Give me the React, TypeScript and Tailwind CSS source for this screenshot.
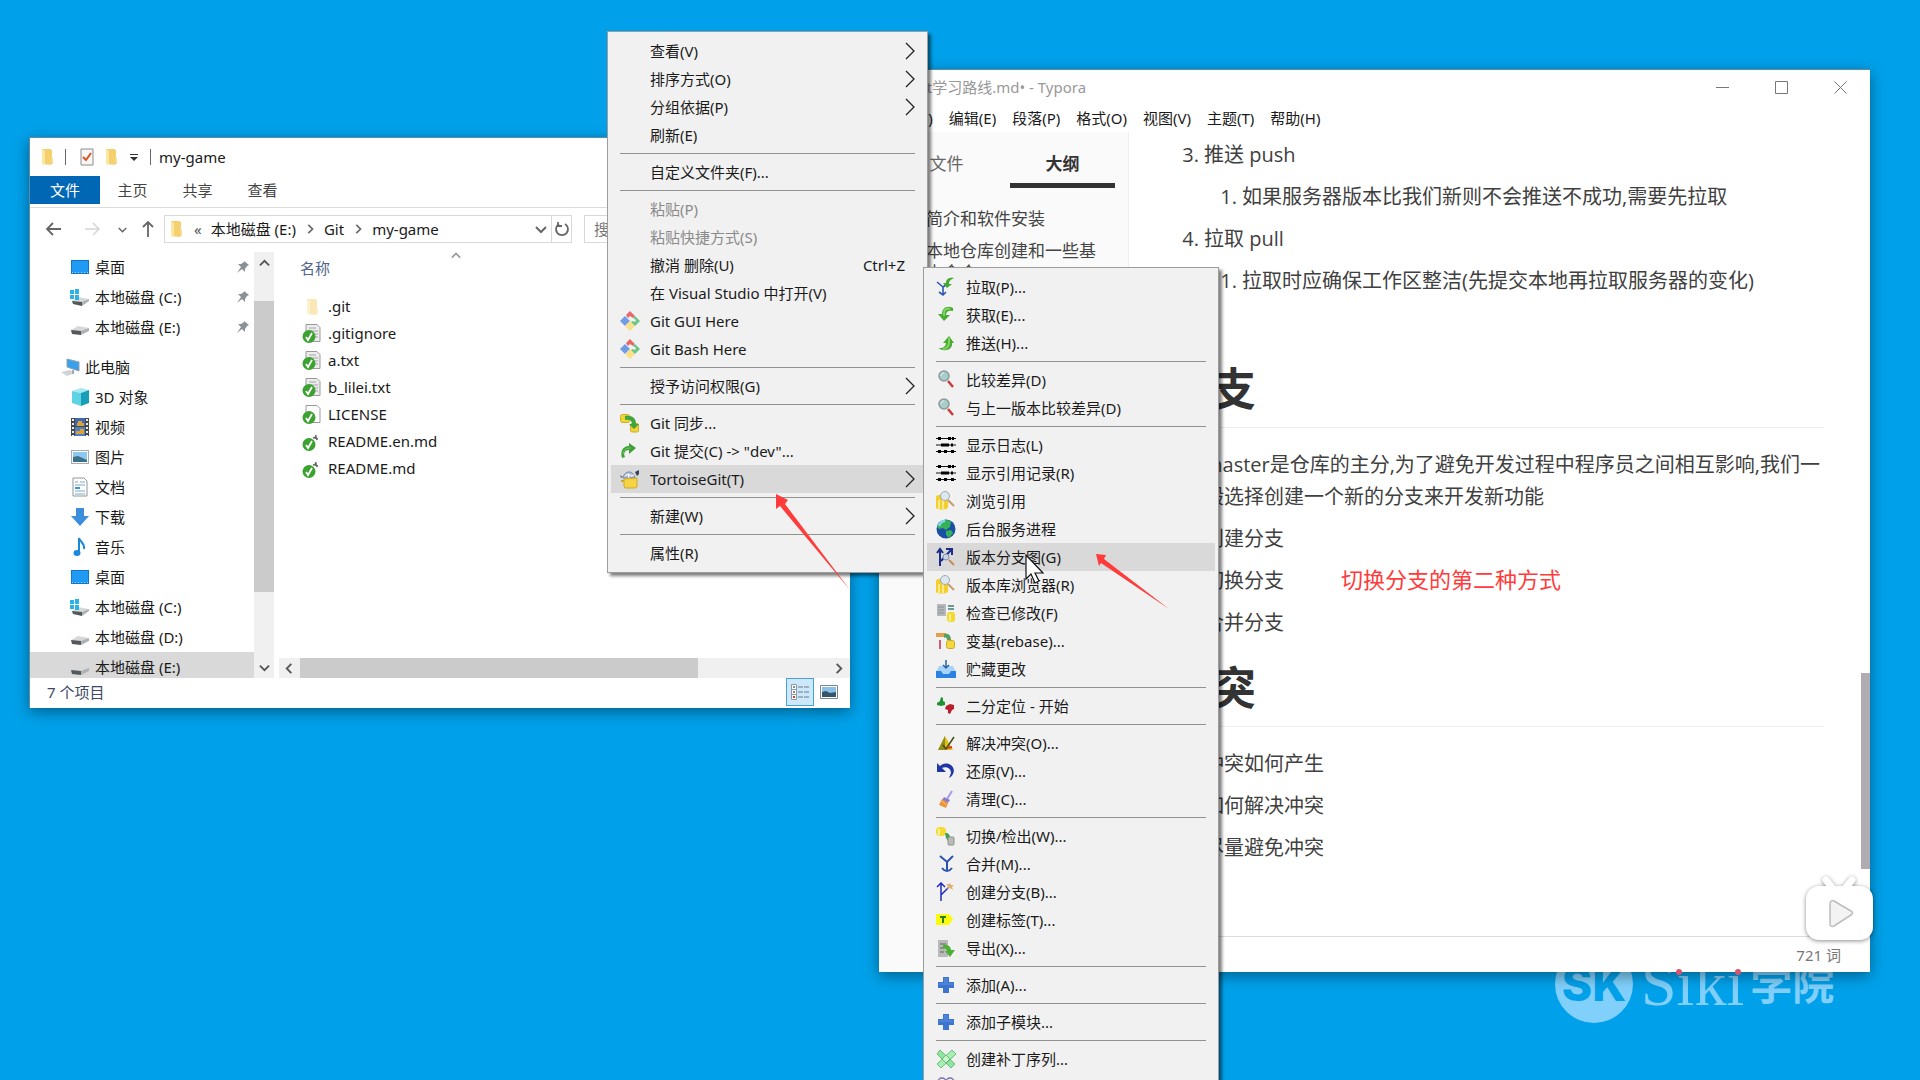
import type { ReactNode } from 'react';

type MenuEntry =
  | { kind: 'separator' }
  | {
      kind: 'item';
      label: string;
      icon?: ReactNode;
      shortcut?: string;
      submenu?: boolean;
      disabled?: boolean;
      active?: boolean;
    };

const separator: MenuEntry = { kind: 'separator' };

function item(label: string, icon?: ReactNode, extra: object = {}): MenuEntry {
  return { kind: 'item', label, icon, ...extra };
}

/* ---------- icons ---------- */

function Svg({ children, className = 'size-5' }: { children: ReactNode; className?: string }) {
  return (
    <svg viewBox="0 0 20 20" className={`${className} shrink-0`} fill="none" aria-hidden="true">
      {children}
    </svg>
  );
}

function FolderIcon({ className = 'h-4 w-3', faded = false }: { className?: string; faded?: boolean }) {
  return (
    <svg viewBox="0 0 12 16" className={`${className} shrink-0`} aria-hidden="true" opacity={faded ? 0.5 : 1}>
      <path d="M1 0h8l2 1v13l-1 2-9-1z" fill="#f5d070" />
      <path d="M1 0l3 2v14l-3-1z" fill="#fbe6a2" />
      <path d="M10 9h2v6h-2z" fill="#f8dc8c" />
    </svg>
  );
}

const gitIcon = (
  <Svg>
    <path d="M5 5l5 5-5 5-5-5z" fill="#6f9be8" />
    <path d="M10 10l5 5-5 5-5-5z" fill="#fbe08a" />
    <path d="M6 4l4-4 5 5-2 2-3-2-2 2z" fill="#e8686a" />
    <path d="M15 5l5 5-5 5-4-4 2-1 2 1 1-2-3-2z" fill="#6cc784" />
  </Svg>
);

const syncIcon = (
  <Svg>
    <rect x="0.5" y="1.5" width="9" height="8" rx="2" fill="#f2d535" stroke="#cdae22" />
    <rect x="10.5" y="10.5" width="8" height="8.5" rx="1.5" fill="#f2d535" stroke="#cdae22" />
    <path d="M5 3c7-1 11 2 11 8h3l-5 5-5-5h3c0-3-2-5-7-4z" fill="#3fa53c" />
  </Svg>
);

const commitIcon = (
  <Svg>
    <path d="M2 17C0 10 3 5 9 5V2l7 5-7 6V9c-4 0-6 3-4 7z" fill="#3e9f36" />
    <path d="M3 13c0-4 3-6 8-6" stroke="#7ccc6a" />
  </Svg>
);

const tortoiseIcon = (
  <Svg>
    <path d="M3 9c1-7 10-9 12 0z" fill="#b3c2da" stroke="#6e819f" />
    <path d="M5 7l3-2 3 2 3-1M8 5l1 4" stroke="#fff" />
    <path d="M15 3l4-2v4l-2 2z" fill="#34405c" />
    <path d="M0 6l3 2-2 1z" fill="#5d6f8e" />
    <path d="M4 10l13-1v9l-2 1H5l-1-2z" fill="#f5d443" stroke="#d1a92b" />
    <path d="M1 12h3" stroke="#d1a92b" strokeWidth="2" />
  </Svg>
);

const pullIcon = (
  <Svg>
    <path d="M1 5l6 5v8M7 10l3-2M3 15l4 3 3-3" stroke="#2c57b8" strokeWidth="1.6" />
    <path d="M18 1c-6-1-8 2-8 5H7l4 5 5-4h-3c0-3 1-4 5-6z" fill="#45a930" />
  </Svg>
);

const fetchIcon = (
  <Svg>
    <path d="M17 3C11 0 6 3 6 9H2l6 7 6-6h-4c0-3 2-5 7-4z" fill="#4aab33" />
    <path d="M14 4c-3-1-6 0-6 4v3" stroke="#82d565" strokeWidth="2" />
  </Svg>
);

const pushIcon = (
  <Svg>
    <path d="M2 15c3 3 15 4 14-5h2l-5-7-6 7h3c0 3-3 6-8 5z" fill="#4aab33" />
    <path d="M13 5v5c0 3-3 6-6 6" stroke="#82d565" strokeWidth="2" />
  </Svg>
);

const diffIcon = (
  <Svg>
    <path d="M12 11l5 6" stroke="#c93a3a" strokeWidth="2.5" />
    <circle cx="8" cy="6" r="5" fill="#a9ccc9" stroke="#8b9a9c" strokeWidth="1.5" />
    <path d="M5 6c0-2 1-3 3-3" stroke="#e8f6f5" />
  </Svg>
);

const logIcon = (
  <Svg>
    <path d="M0 3.5h20M0 10h20M0 16.5h20" stroke="#111" />
    <path d="M2 3.5h3M12 3.5h3M16 3.5h2M5 10h8M15 10h2M2 16.5h3M8 16.5h3M15 16.5h3" stroke="#000" strokeWidth="3" />
  </Svg>
);

const browseIcon = (
  <Svg>
    <path d="M0 6c0-3 8-3 12 0v11c-3 2-10 2-12 0z" fill="#f3cf2d" />
    <path d="M3 9v9M7 9v9" stroke="#fbe98a" strokeWidth="2" />
    <path d="M12 9l6 6" stroke="#c99b66" strokeWidth="2" />
    <circle cx="9" cy="5" r="4.5" fill="#dce7ef" stroke="#a0a8ae" />
  </Svg>
);

const globeIcon = (
  <Svg>
    <circle cx="10" cy="10" r="9.5" fill="#1b4fa6" />
    <path d="M4 3c5-3 9-2 11 0l-1 5-4 3-3-2-4 1-2-2z" fill="#35b257" />
    <path d="M10 12l5-1 2 3-4 5-3-3z" fill="#35b257" />
    <path d="M3 7c1-3 3-5 6-5" stroke="#7fd8ee" strokeWidth="2.5" />
  </Svg>
);

const graphIcon = (
  <Svg>
    <path d="M4 19V2M1 6l3-4 3 4M5 14l10-11M10 2h6v6" stroke="#1c2c8c" strokeWidth="2" />
    <circle cx="10" cy="10" r="3" fill="#c9d3e6" stroke="#8390b0" />
    <path d="M13 13l5 5" stroke="#c98a58" strokeWidth="2" />
  </Svg>
);

const statusIcon = (
  <Svg>
    <rect x="1" y="1" width="9" height="12" fill="#b5b8bb" />
    <path d="M2 4h6M2 7h6M2 10h6" stroke="#8c9094" />
    <path d="M12 3h6M12 6h6" stroke="#3f7c78" strokeWidth="1.5" />
    <rect x="11" y="9" width="8" height="10" rx="3" fill="#f3d92c" />
    <path d="M14 11v7" stroke="#faef93" strokeWidth="2" />
  </Svg>
);

const rebaseIcon = (
  <Svg>
    <path d="M0 2h10v4H0z" fill="#e3a04a" />
    <path d="M4 9v9" stroke="#c32c46" strokeWidth="1.5" />
    <path d="M8 3c5-1 7 2 7 6h-4c0-2-1-3-3-2z" fill="#5c9d62" />
    <rect x="10.5" y="9.5" width="8" height="8" rx="2" fill="#f3d73b" stroke="#caa82a" />
  </Svg>
);

const stashIcon = (
  <Svg>
    <path d="M3 7h14l3 6v5H0v-5z" fill="#a9d3f8" />
    <path d="M0 12h5l2 3h6l2-3h5v7H0z" fill="#2a83e2" />
    <path d="M10 1v8M7 6l3 3 3-3" stroke="#2565a8" strokeWidth="1.5" />
  </Svg>
);

const bisectIcon = (
  <Svg>
    <path d="M1 7l3-2 1-4 2 1v3l2 1v3l-4 1-4-1z" fill="#1f9331" />
    <path d="M10 10l4-2 4 1v4l-2 1-2 4-2-1v-3l-3-1z" fill="#bb1f2b" />
  </Svg>
);

const conflictIcon = (
  <Svg>
    <path d="M9 3l8 14H2z" fill="#dfc01e" />
    <path d="M9 3l-7 14h7z" fill="#8f8c1c" />
    <path d="M7 12l3 4 8-12" stroke="#44490f" strokeWidth="1.5" />
    <path d="M11 15l5-1" stroke="#d03c20" strokeWidth="2" />
  </Svg>
);

const revertIcon = (
  <Svg>
    <path d="M1 2v9h9L6 7c4-2 9 0 9 5l-2 5c6-3 7-11 0-14-4-1-7 0-9 2z" fill="#2236a6" />
  </Svg>
);

const cleanIcon = (
  <Svg>
    <path d="M16 2l-5 8" stroke="#a79ae6" strokeWidth="2" />
    <path d="M8 8l6 3-2 3-6-3z" fill="#8a7cd6" />
    <path d="M6 10l6 4-2 5-7-3z" fill="#f0923a" />
    <path d="M6 12l4 4" stroke="#fbc98a" />
  </Svg>
);

const switchIcon = (
  <Svg>
    <rect x="0" y="1" width="10" height="9" rx="4" fill="#f4dc32" />
    <path d="M3 3v6" stroke="#faf0a2" strokeWidth="2" />
    <path d="M9 7c4 0 5 2 5 5h3l-4 4-3-4" fill="#3d9c56" />
    <rect x="12" y="11" width="6" height="8" rx="1" fill="#b8bdb8" stroke="#8b918b" />
  </Svg>
);

const mergeIcon = (
  <Svg>
    <path d="M4 2l7 6 6-6M11 8v9M6 14c3 4 7 4 10 0" stroke="#2a53b0" strokeWidth="2" />
  </Svg>
);

const branchIcon = (
  <Svg>
    <path d="M5 19V2M1 5l4-4 4 4M5 13l8-8" stroke="#1f2cc0" strokeWidth="1.5" />
    <path d="M14 1l1 2 3 0-2 2 1 3-3-2-3 1 1-3-2-2h3z" fill="#e0b070" />
  </Svg>
);

const tagIcon = (
  <Svg>
    <path d="M0 4h13l4 5-4 6H0z" fill="#fbfb10" />
    <path d="M4 7h6M7 7v6" stroke="#2b7d2b" strokeWidth="2" />
  </Svg>
);

const exportIcon = (
  <Svg>
    <path d="M2 2h10v17H2z" fill="#b7bab8" />
    <path d="M4 6h6M4 10h4M4 14h4" stroke="#7d827f" strokeWidth="1.5" />
    <path d="M7 7c5-1 8 2 8 5h4l-5 7-5-6h2c0-2-2-3-4-2z" fill="#4db035" />
  </Svg>
);

const addIcon = (
  <Svg>
    <path d="M7 2h6v5h5v6h-5v5H7v-5H2V7h5z" fill="#3c74d0" />
    <path d="M8 3h4v5h5v2H3V8h5z" fill="#4d82da" />
  </Svg>
);

const patchIcon = (
  <Svg>
    <path d="M4 1l15 14-4 4L1 5z" fill="#8fe79f" stroke="#4aa55c" strokeWidth="0.7" />
    <path d="M16 1l4 4L5 19l-4-4z" fill="#a4efb1" stroke="#4aa55c" strokeWidth="0.7" />
    <path d="M10 6l4 4-4 4-4-4z" fill="#c9f8cf" stroke="#4aa55c" strokeWidth="0.7" />
  </Svg>
);

const applyPatchIcon = (
  <Svg>
    <circle cx="6" cy="5" r="4" stroke="#7c6db4" strokeWidth="1.5" />
    <circle cx="14" cy="5" r="4" stroke="#7c6db4" strokeWidth="1.5" />
  </Svg>
);

const desktopIcon = (
  <Svg>
    <rect x="1.5" y="3.5" width="17" height="13" fill="#1f9bf5" stroke="#1577c4" />
    <path d="M2 15.5h16" stroke="#9bd6ff" strokeDasharray="1 2" />
  </Svg>
);

const diskIcon = (
  <Svg>
    <path d="M1 13l7-4 11 2-8 5-9-1z" fill="#d6d8d9" />
    <path d="M1 13l10 1v4l-9-1z" fill="#53585b" />
    <path d="M11 14l8-3v3l-8 4z" fill="#aeb2b4" />
  </Svg>
);

const systemDiskIcon = (
  <Svg>
    <path d="M2 14l6-4 11 2-7 5-9-1z" fill="#d6d8d9" />
    <path d="M2 14l10 1v4l-9-2z" fill="#53585b" />
    <path d="M12 15l7-3v2l-7 5z" fill="#aeb2b4" />
    <path d="M0 3h4v4H0zM5 2h4v5H5zM0 8h4v4H0zM5 8h4v5H5z" fill="#29b3e6" />
  </Svg>
);

const computerIcon = (
  <Svg>
    <path d="M6 2l12 3v9L6 10z" fill="#3ba0ea" stroke="#8fa2b0" />
    <path d="M0 15l9-2 5 3-8 3z" fill="#d0d4d7" />
    <path d="M12 13v4" stroke="#a5acb0" strokeWidth="2" />
  </Svg>
);

const cubeIcon = (
  <Svg>
    <path d="M2 4l9-3 8 2-8 3z" fill="#a5eaf2" />
    <path d="M2 4l9 2v13l-9-3z" fill="#5fd2e3" />
    <path d="M11 6l8-3v13l-8 3z" fill="#169fb9" />
  </Svg>
);

const videoIcon = (
  <Svg>
    <rect x="1" y="1" width="18" height="18" fill="#474747" />
    <rect x="5" y="1" width="10" height="8" fill="#4067b4" />
    <rect x="5" y="10" width="10" height="9" fill="#4d7fc4" />
    <path d="M8 4h4v2h2v3H7V6h1zM6 14h4v-2h4v5H6z" fill="#d9a23a" />
    <path d="M3 2v17M17 2v17" stroke="#eee" strokeWidth="2" strokeDasharray="2 2" />
  </Svg>
);

const pictureIcon = (
  <Svg>
    <rect x="1.5" y="3.5" width="17" height="13" fill="#fff" stroke="#a4adb3" />
    <rect x="3" y="5" width="14" height="10" fill="#8cc8ef" />
    <path d="M3 10l5-1 9 4v2H3z" fill="#3d6f8a" />
  </Svg>
);

const documentIcon = (
  <Svg>
    <path d="M3 1h11l3 3v15H3z" fill="#fff" stroke="#8e979d" />
    <path d="M5 5h3M10 5h5M5 8h10M5 14h10M5 17h10" stroke="#7ea7c6" />
    <path d="M5 11h5" stroke="#3d93da" strokeWidth="2" />
  </Svg>
);

const downloadIcon = (
  <Svg>
    <path d="M6 1h8v8h5l-9 10L1 9h5z" fill="#3b8edc" />
  </Svg>
);

const musicIcon = (
  <Svg>
    <ellipse cx="7" cy="16" rx="3.500" ry="3" fill="#1b88dc" />
    <path d="M9 16V1c1 4 6 5 5 11" stroke="#1b88dc" strokeWidth="2" />
  </Svg>
);

const checkBadge = (
  <>
    <circle cx="7" cy="12.5" r="6.5" fill="#3ba22f" />
    <path d="M4 13l2 3 4-7" stroke="#fff" strokeWidth="1.8" />
  </>
);

const textFileIcon = (
  <Svg>
    <path d="M4 0.5h11l3 3v14H4z" fill="#ececec" stroke="#9a9a9a" />
    <path d="M7 4h7M7 7h9M11 10h5M13 13h3" stroke="#a5a5a5" />
    {checkBadge}
  </Svg>
);

const plainFileIcon = (
  <Svg>
    <path d="M4 0.5h11l3 3v14H4z" fill="#fff" stroke="#9a9a9a" />
    {checkBadge}
  </Svg>
);

const markdownFileIcon = (
  <Svg>
    <path d="M11 6l3-1 1 3M14 3l-1 3 3 1" stroke="#6b6b6b" strokeWidth="1.5" />
    {checkBadge}
  </Svg>
);

function Chevron({ direction, className }: { direction: 'up' | 'down' | 'left' | 'right'; className: string }) {
  const paths = {
    up: 'M1 8l5-5 5 5',
    down: 'M1 4l5 5 5-5',
    left: 'M8 1L3 6l5 5',
    right: 'M4 1l5 5-5 5',
  };
  return (
    <svg viewBox="0 0 12 12" className={`${className} shrink-0`} fill="none" stroke="currentColor" aria-hidden="true">
      <path d={paths[direction]} strokeWidth="2" />
    </svg>
  );
}

function PinIcon() {
  return (
    <svg viewBox="0 0 14 14" className="size-[14px] shrink-0" aria-hidden="true">
      <path d="M8 1l5 4-2 1-2 3v3L6 9l-5 4 4-6-3-3 3 0 3-2z" fill="#8a9097" />
    </svg>
  );
}

/* ---------- data ---------- */

const folderMenu: MenuEntry[] = [
  item('查看(V)', undefined, { submenu: true }),
  item('排序方式(O)', undefined, { submenu: true }),
  item('分组依据(P)', undefined, { submenu: true }),
  item('刷新(E)'),
  separator,
  item('自定义文件夹(F)...'),
  separator,
  item('粘贴(P)', undefined, { disabled: true }),
  item('粘贴快捷方式(S)', undefined, { disabled: true }),
  item('撤消 删除(U)', undefined, { shortcut: 'Ctrl+Z' }),
  item('在 Visual Studio 中打开(V)'),
  item('Git GUI Here', gitIcon),
  item('Git Bash Here', gitIcon),
  separator,
  item('授予访问权限(G)', undefined, { submenu: true }),
  separator,
  item('Git 同步...', syncIcon),
  item('Git 提交(C) -> "dev"...', commitIcon),
  item('TortoiseGit(T)', tortoiseIcon, { submenu: true, active: true }),
  separator,
  item('新建(W)', undefined, { submenu: true }),
  separator,
  item('属性(R)'),
];

const tortoiseMenu: MenuEntry[] = [
  item('拉取(P)...', pullIcon),
  item('获取(E)...', fetchIcon),
  item('推送(H)...', pushIcon),
  separator,
  item('比较差异(D)', diffIcon),
  item('与上一版本比较差异(D)', diffIcon),
  separator,
  item('显示日志(L)', logIcon),
  item('显示引用记录(R)', logIcon),
  item('浏览引用', browseIcon),
  item('后台服务进程', globeIcon),
  item('版本分支图(G)', graphIcon, { active: true }),
  item('版本库浏览器(R)', browseIcon),
  item('检查已修改(F)', statusIcon),
  item('变基(rebase)...', rebaseIcon),
  item('贮藏更改', stashIcon),
  separator,
  item('二分定位 - 开始', bisectIcon),
  separator,
  item('解决冲突(O)...', conflictIcon),
  item('还原(V)...', revertIcon),
  item('清理(C)...', cleanIcon),
  separator,
  item('切换/检出(W)...', switchIcon),
  item('合并(M)...', mergeIcon),
  item('创建分支(B)...', branchIcon),
  item('创建标签(T)...', tagIcon),
  item('导出(X)...', exportIcon),
  separator,
  item('添加(A)...', addIcon),
  separator,
  item('添加子模块...', addIcon),
  separator,
  item('创建补丁序列...', patchIcon),
  item('', applyPatchIcon),
];

const quickAccess = [
  { label: '桌面', icon: desktopIcon },
  { label: '本地磁盘 (C:)', icon: systemDiskIcon },
  { label: '本地磁盘 (E:)', icon: diskIcon },
];

const computerItems = [
  { label: '3D 对象', icon: cubeIcon },
  { label: '视频', icon: videoIcon },
  { label: '图片', icon: pictureIcon },
  { label: '文档', icon: documentIcon },
  { label: '下载', icon: downloadIcon },
  { label: '音乐', icon: musicIcon },
  { label: '桌面', icon: desktopIcon },
  { label: '本地磁盘 (C:)', icon: systemDiskIcon },
  { label: '本地磁盘 (D:)', icon: diskIcon },
  { label: '本地磁盘 (E:)', icon: diskIcon, selected: true },
];

const files = [
  { name: '.git', icon: <span className="flex size-5 items-center pl-1"><FolderIcon faded /></span> },
  { name: '.gitignore', icon: textFileIcon },
  { name: 'a.txt', icon: textFileIcon },
  { name: 'b_lilei.txt', icon: textFileIcon },
  { name: 'LICENSE', icon: plainFileIcon },
  { name: 'README.en.md', icon: markdownFileIcon },
  { name: 'README.md', icon: markdownFileIcon },
];

/* ---------- context menus ---------- */

function ContextMenu({ entries, className }: { entries: MenuEntry[]; className: string }) {
  return (
    <ul
      className={`absolute border border-[#9d9d9d] bg-[#f1f1f1] px-[3px] py-[5px] text-[15px] text-[#1a1a1a] shadow-[3px_3px_3px_rgba(0,0,0,0.5)] ${className}`}
    >
      {entries.map((entry, index) =>
        entry.kind === 'separator' ? (
          <li key={index} className="flex h-[9px] items-center px-[9px]">
            <hr className="w-full border-[#919191]" />
          </li>
        ) : (
          <li key={index}>
            <button
              type="button"
              disabled={entry.disabled}
              className={`flex h-7 w-full items-center gap-[10px] px-[9px] text-left whitespace-nowrap ${
                entry.active ? 'bg-[#d9d9d9]' : ''
              } ${entry.disabled ? 'text-[#8a8a8a]' : ''}`}
            >
              <span className="size-5 shrink-0">{entry.icon}</span>
              <span className="flex-1">{entry.label}</span>
              {entry.shortcut && <span className="mr-[10px]">{entry.shortcut}</span>}
              {entry.submenu && (
                <svg viewBox="0 0 10 18" className="h-[18px] w-[10px]" fill="none" stroke="#222" aria-hidden="true">
                  <path d="M1 1l8 8-8 8" strokeWidth="1.3" />
                </svg>
              )}
            </button>
          </li>
        )
      )}
    </ul>
  );
}

/* ---------- explorer window ---------- */

function TreeItem({ label, icon, selected = false, pinned = false }: { label: string; icon: ReactNode; selected?: boolean; pinned?: boolean }) {
  return (
    <button
      type="button"
      className={`flex h-[30px] w-full shrink-0 items-center gap-[5px] pr-1 pl-10 text-left ${selected ? 'bg-[#d9d9d9]' : ''}`}
    >
      {icon}
      <span className="flex-1">{label}</span>
      {pinned && <PinIcon />}
    </button>
  );
}

function ExplorerWindow() {
  return (
    <section className="absolute top-[137px] left-[29px] flex h-[571px] w-[821px] flex-col border-t border-l border-[#5d8ba6] bg-white text-[15px] text-[#1a1a1a] shadow-[0_4px_14px_rgba(0,0,0,0.4)]">
      <header className="flex h-[38px] shrink-0 items-center pl-[11px]">
        <FolderIcon />
        <span className="ml-3 h-4 w-px bg-[#666]" />
        <svg viewBox="0 0 14 18" className="ml-[14px] h-[18px] w-[14px]" fill="none" aria-hidden="true">
          <path d="M1 1h12v16H1z" fill="#f7f7f7" stroke="#8c8c8c" />
          <path d="M3 9l3 3 5-7" stroke="#d9541e" strokeWidth="2" />
        </svg>
        <span className="ml-[11px]"><FolderIcon /></span>
        <svg viewBox="0 0 8 7" className="ml-[13px] h-[7px] w-2" aria-hidden="true">
          <path d="M0 0h8v1H0zM0 3h8L4 7z" fill="#333" />
        </svg>
        <span className="ml-3 h-4 w-px bg-[#666]" />
        <h1 className="ml-2">my-game</h1>
      </header>

      <nav className="flex h-8 shrink-0 items-start border-b border-[#dcdcdc] text-[#444]">
        <button type="button" className="h-7 w-[70px] bg-[#0067b4] text-white">文件</button>
        <button type="button" className="h-7 w-[65px]">主页</button>
        <button type="button" className="h-7 w-[65px]">共享</button>
        <button type="button" className="h-7 w-[65px]">查看</button>
      </nav>

      <div className="mb-[2px] flex h-[42px] shrink-0 items-center text-[#666]">
        <button type="button" aria-label="后退" className="ml-4 h-4 w-4">
          <svg viewBox="0 0 16 16" fill="none" stroke="currentColor" strokeWidth="1.8"><path d="M15 8H1M7 2L1 8l6 6" /></svg>
        </button>
        <button type="button" aria-label="前进" className="ml-[22px] h-4 w-4 text-[#d5d5d5]">
          <svg viewBox="0 0 16 16" fill="none" stroke="currentColor" strokeWidth="1.5"><path d="M1 8h14M9 2l6 6-6 6" /></svg>
        </button>
        <button type="button" aria-label="最近浏览的位置" className="ml-[18px]"><Chevron direction="down" className="size-[9px]" /></button>
        <button type="button" aria-label="上移" className="ml-[15px] h-4 w-3">
          <svg viewBox="0 0 12 16" fill="none" stroke="currentColor" strokeWidth="1.8"><path d="M6 16V1M1 6l5-5 5 5" /></svg>
        </button>
        <div className="ml-[10px] flex h-7 w-[408px] shrink-0 items-center border border-[#d9d9d9] pl-[5px] text-[#1a1a1a]">
          <FolderIcon />
          <span className="ml-3 text-[#555]">«</span>
          <button type="button" className="ml-[9px] whitespace-nowrap">本地磁盘 (E:)</button>
          <Chevron direction="right" className="mx-[9px] size-[10px] text-[#666]" />
          <button type="button">Git</button>
          <Chevron direction="right" className="mx-[9px] size-[10px] text-[#666]" />
          <button type="button">my-game</button>
          <Chevron direction="down" className="mr-1 ml-auto size-3 text-[#666]" />
          <button type="button" aria-label="刷新" className="flex h-full w-5 items-center justify-center border-l border-[#d9d9d9] text-[#666]">
            <svg viewBox="0 0 16 16" className="size-4" fill="none" stroke="currentColor" strokeWidth="1.8">
              <path d="M11 3a6 6 0 1 1-6 0M4 1v4h4" />
            </svg>
          </button>
        </div>
        <input
          type="search"
          aria-label="搜索"
          placeholder='搜索"my-game"'
          className="ml-3 h-7 min-w-0 flex-1 border border-[#d9d9d9] px-[9px] placeholder:text-[#777]"
        />
      </div>

      <div className="flex min-h-0 flex-1">
        <aside className="flex w-[224px] shrink-0 flex-col overflow-hidden">
          {quickAccess.map((entry) => (
            <TreeItem key={entry.label} label={entry.label} icon={entry.icon} pinned />
          ))}
          <button type="button" className="mt-[10px] flex h-[30px] shrink-0 items-center gap-1 pl-[31px]">
            {computerIcon}
            此电脑
          </button>
          {computerItems.map((entry) => (
            <TreeItem key={entry.label} {...entry} />
          ))}
        </aside>
        <div className="flex w-5 shrink-0 flex-col items-center bg-[#f0f0f0] text-[#555]">
          <Chevron direction="up" className="my-[6px] size-[11px]" />
          <div className="mt-[26px] h-[291px] w-full bg-[#cbcbcb]" />
          <Chevron direction="down" className="mt-auto mb-[5px] size-[11px]" />
        </div>

        <div className="flex min-w-0 flex-1 flex-col">
          <div className="relative mb-[9px] flex h-8 items-center pl-[26px] text-[#53648a]">
            名称
            <Chevron direction="up" className="absolute -top-px left-[177px] size-[10px] text-[#999]" />
          </div>
          <ul>
            {files.map((file) => (
              <li key={file.name} className="flex h-[27px] items-center gap-[6px] pl-7">
                {file.icon}
                {file.name}
              </li>
            ))}
          </ul>
          <div className="mt-auto ml-[5px] flex h-5 items-center bg-[#f0f0f0] text-[#555]">
            <Chevron direction="left" className="mx-[5px] size-[11px]" />
            <div className="h-full w-[398px] bg-[#cbcbcb]" />
            <Chevron direction="right" className="mr-[6px] ml-auto size-[11px]" />
          </div>
        </div>
      </div>

      <footer className="flex h-[30px] shrink-0 items-center pr-[6px] pb-[2px] pl-[17px] text-[#3d4765]">
        <span className="flex-1">7 个项目</span>
        <button type="button" aria-label="详细信息" className="flex h-7 w-7 items-center justify-center border border-[#4aa0d8] bg-[#cce8fa]">
          <svg viewBox="0 0 20 18" className="h-[18px] w-5" fill="none">
            <path d="M1.500 1.500h5v5h-5zM1.500 6.500h5v5h-5zM1.500 11.500h5v5h-5z" fill="#fff" stroke="#8d9aa3" />
            <path d="M3 4h2M3 9h2" stroke="#5c6468" strokeWidth="1.5" />
            <path d="M3 14h2" stroke="#d43b2b" strokeWidth="2" />
            <path d="M8 4h5M14 4h5M8 9h5M14 9h5M8 14h5M14 14h5" stroke="#6c7c86" />
          </svg>
        </button>
        <button type="button" aria-label="大缩略图" className="flex h-7 w-[30px] items-center justify-center">
          <svg viewBox="0 0 18 14" className="h-[14px] w-[18px]">
            <path d="M0.500 0.500h17v13h-17z" fill="#fff" stroke="#7c8790" />
            <path d="M2 2h14v7H2z" fill="#8dc0e6" />
            <path d="M2 7l4-1 4 2 6-1v5H2z" fill="#34556c" />
          </svg>
        </button>
      </footer>
    </section>
  );
}

/* ---------- editor window ---------- */

function NumberedItem({ number, text, children }: { number: number; text: string; children?: ReactNode }) {
  return (
    <li className="mb-[10px] flex">
      <span className="w-[38px] shrink-0 pr-[5px] text-right">{number}.</span>
      <div className="min-w-0 flex-1">
        <p>{text}</p>
        {children}
      </div>
    </li>
  );
}

function EditorWindow() {
  return (
    <section className="absolute top-[69px] right-[50px] bottom-[108px] left-[879px] flex flex-col border-t border-[#5d8ba6] bg-white shadow-[0_4px_14px_rgba(0,0,0,0.4)]">
      <header className="flex h-[34px] shrink-0 items-center pl-[33px] text-[15px] text-[#999]">
        <h1 className="flex-1">Git学习路线.md• - Typora</h1>
        <div className="mr-[23px] flex gap-[46px] text-[#777]">
          <button type="button" aria-label="最小化" className="size-[13px]">
            <svg viewBox="0 0 13 13" stroke="currentColor"><path d="M0 6.5h13" /></svg>
          </button>
          <button type="button" aria-label="最大化" className="size-[13px]">
            <svg viewBox="0 0 13 13" fill="none" stroke="currentColor"><path d="M0.500 0.500h12v12h-12z" /></svg>
          </button>
          <button type="button" aria-label="关闭" className="size-[13px]">
            <svg viewBox="0 0 13 13" stroke="currentColor"><path d="M0.500 0.500l12 12M12.500 0.500l-12 12" /></svg>
          </button>
        </div>
      </header>
      <nav className="flex h-7 shrink-0 items-center gap-4 pt-px pl-[7px] text-[15px] whitespace-nowrap text-[#1a1a1a]">
        {['文件(F)', '编辑(E)', '段落(P)', '格式(O)', '视图(V)', '主题(T)', '帮助(H)'].map((label) => (
          <button key={label} type="button">{label}</button>
        ))}
      </nav>

      <div className="flex min-h-0 flex-1">
        <aside className="w-[250px] shrink-0 border-r border-[#eee] bg-[#fafafa] text-[17px] text-[#444]">
          <div className="flex justify-end gap-[11px] pr-[13px]">
            <button type="button" className="h-14 w-[105px] pt-[7px] text-[#666]">文件</button>
            <button type="button" className="h-14 w-[105px] border-b-5 border-[#333] pt-3 font-bold text-[#333]">大纲</button>
          </div>
          <ul className="mt-5 ml-[47px] w-[180px] leading-[22px]">
            <li className="mb-[10px]">简介和软件安装</li>
            <li className="mb-[10px]">本地仓库创建和一些基本命令</li>
          </ul>
        </aside>

        <div className="flex min-w-0 flex-1 flex-col">
          <div className="flex min-h-0 flex-1">
            <article className="min-w-0 flex-1 overflow-hidden px-[37px] pt-[7px] font-['Open_Sans','Noto_Sans_CJK_SC',sans-serif] text-xl leading-8 text-[#404040]">
              <ol>
                <NumberedItem number={3} text="推送 push">
                  <ol className="mt-[10px]">
                    <NumberedItem number={1} text="如果服务器版本比我们新则不会推送不成功,需要先拉取" />
                  </ol>
                </NumberedItem>
              </ol>
              <ol className="-mt-[10px]">
                <NumberedItem number={4} text="拉取 pull">
                  <ol className="mt-[10px]">
                    <NumberedItem number={1} text="拉取时应确保工作区整洁(先提交本地再拉取服务器的变化)" />
                  </ol>
                </NumberedItem>
              </ol>
              <h2 className="mt-[54px] border-b border-[#eee] pb-[10px] text-[45px] leading-[56px] font-bold text-[#333]">分支</h2>
              <ol className="mt-[21px]">
                <NumberedItem number={1} text="master是仓库的主分,为了避免开发过程中程序员之间相互影响,我们一般选择创建一个新的分支来开发新功能" />
                <NumberedItem number={2} text="创建分支" />
                <NumberedItem number={3} text="切换分支" />
                <NumberedItem number={4} text="合并分支" />
              </ol>
              <h2 className="mt-[21px] border-b border-[#eee] pb-[10px] text-[45px] leading-[56px] font-bold text-[#333]">冲突</h2>
              <ol className="mt-[21px]">
                <NumberedItem number={1} text="冲突如何产生" />
                <NumberedItem number={2} text="如何解决冲突" />
                <NumberedItem number={3} text="尽量避免冲突" />
              </ol>
            </article>
            <div className="w-[9px] shrink-0 pt-[541px]">
              <div className="h-[196px] bg-[#b0acb1]" />
            </div>
          </div>
          <footer className="flex h-9 shrink-0 items-center justify-end border-t border-[#ddd] pr-[29px] text-[15px] leading-5 text-[#777]">
            721 词
          </footer>
        </div>
      </div>
    </section>
  );
}

/* ---------- desktop overlays ---------- */

function Watermark() {
  return (
    <div className="absolute top-[945px] left-[1555px] flex items-center text-[#80d0fb]">
      <div className="flex size-[78px] items-center justify-center rounded-full bg-[#80d0fb] font-[Inter,sans-serif] text-[46px] font-extrabold text-[#00a1ea]">
        SK
      </div>
      <span className="ml-2 font-['Liberation_Serif',serif] text-[64px] leading-[78px]">Siki</span>
      <span className="ml-[6px] text-[42px] leading-[78px] font-bold">学院</span>
    </div>
  );
}

function PlayerBadge() {
  return (
    <svg viewBox="0 0 80 80" className="absolute top-[868px] left-[1800px] size-20 drop-shadow-[0_1px_2px_rgba(0,0,0,0.45)]" aria-hidden="true">
      <path d="M26 12l8 10M52 12l-8 10" stroke="#fff" strokeWidth="7" strokeLinecap="round" />
      <rect x="6" y="18" width="67" height="54" rx="13" fill="#fff" />
      <path d="M30 36c0-3 2-4 4-3l17 10c2 1 2 3 0 4L34 58c-2 1-4 0-4-2z" fill="#f3f3f3" stroke="#bdbdbd" strokeWidth="1.5" />
    </svg>
  );
}

export default function App() {
  return (
    <main className="relative h-screen w-full overflow-hidden bg-[#00a1ea] font-['Noto_Sans','Noto_Sans_CJK_SC',sans-serif]">
      <Watermark />
      <ExplorerWindow />
      <EditorWindow />
      <span className="absolute top-[969px] left-[1676px] size-[6px] rounded-full bg-[#d9546a]" />
      <span className="absolute top-[969px] left-[1735px] size-[6px] rounded-full bg-[#d9546a]" />
      <PlayerBadge />

      <ContextMenu entries={folderMenu} className="top-[31px] left-[607px] w-[321px]" />
      <ContextMenu entries={tortoiseMenu} className="top-[267px] left-[923px] w-[296px]" />

      <p className="absolute top-[563px] left-[1341px] text-[22px] leading-8 text-[#ff3b3b]">切换分支的第二种方式</p>
      <svg viewBox="0 0 80 100" className="absolute top-[494px] left-[776px] h-[100px] w-20" aria-hidden="true">
        <path d="M0 0l12 6-3 4 65 86L4 12l-4 3z" fill="#ff3b3b" />
      </svg>
      <svg viewBox="0 0 80 60" className="absolute top-[554px] left-[1096px] h-[60px] w-20" aria-hidden="true">
        <path d="M0 0l10 1-2 4 65 50L5 9 3 12z" fill="#ff3b3b" />
      </svg>
      <svg viewBox="0 0 20 30" className="absolute top-[554px] left-[1025px] h-[30px] w-5" aria-hidden="true">
        <path d="M1 1v24l5-5 4 9 4-2-4-8h8z" fill="#fff" stroke="#111" strokeWidth="1.2" />
      </svg>
    </main>
  );
}
